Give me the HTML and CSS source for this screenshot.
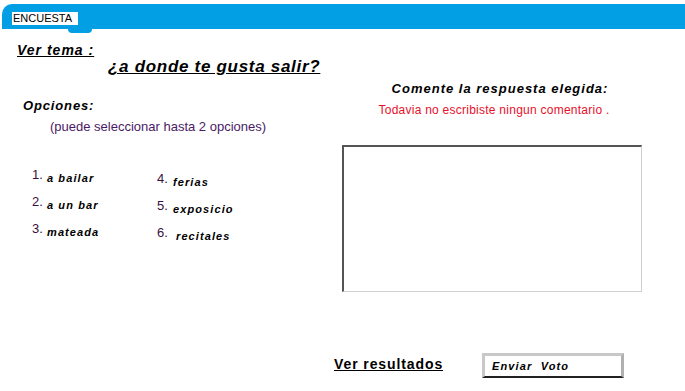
FILE: index.html
```html
<!DOCTYPE html>
<html lang="es">
<head>
  <meta charset="UTF-8" />
  <title>Encuesta</title>
  <link rel="stylesheet" href="styles.css">
</head>
<body>

  <header class="topbar">
    <span class="tab">ENCUESTA</span>
    <span class="tab-notch"></span>
  </header>

  <div class="survey">
    <section class="left">
      <div class="tema-label">Ver tema :</div>
      <h1 class="tema">¿a donde te gusta salir?</h1>
      <h2 class="opciones">Opciones:</h2>
      <p class="hint">(puede seleccionar hasta 2 opciones)</p>

      <div class="options">
        <ul class="col">
          <li><span class="num">1.</span><span class="opt">a bailar</span></li>
          <li><span class="num">2.</span><span class="opt">a un bar</span></li>
          <li><span class="num">3.</span><span class="opt">mateada</span></li>
        </ul>
        <ul class="col col-2">
          <li><span class="num">4.</span><span class="opt">ferias</span></li>
          <li><span class="num">5.</span><span class="opt">exposicio</span></li>
          <li><span class="num">6.</span><span class="opt opt-wide">recitales</span></li>
        </ul>
      </div>
    </section>

    <section class="right">
      <h2 class="comment-title">Comente la respuesta elegida:</h2>
      <p class="warn">Todavia no escribiste ningun comentario .</p>
      <textarea class="comment"></textarea>
    </section>
  </div>

  <footer class="actions">
    <a href="#" class="results">Ver resultados</a>
    <button class="vote">Enviar&nbsp; Voto</button>
  </footer>

</body>
</html>
```

FILE: styles.css
```css
* {
  margin: 0;
  padding: 0;
  box-sizing: border-box;
}

html, body {
  width: 100%;
  min-height: 100vh;
  background: #fff;
  color: #000;
  font-family: 'Liberation Sans', Arial, sans-serif;
}

/* top bar */
.topbar {
  position: relative;
  height: 25px;
  margin: 4px 0 0 2px;
  background: #039fe5;
  border-top-left-radius: 10px;
  padding: 4px 0 0 10px;
}

.tab {
  display: inline-block;
  background: #fff;
  font-size: 11px;
  line-height: 13px;
  height: 13px;
  width: 66px;
  padding-left: 1px;
}

.tab-notch {
  position: absolute;
  left: 66px;
  top: 25px;
  width: 24px;
  height: 4px;
  background: #039fe5;
  border-radius: 0 0 12px 12px;
}

/* main area */
.survey {
  display: flex;
}

.left {
  width: 334px;
  flex-shrink: 0;
}

.tema-label {
  margin: 14px 0 0 17px;
  font-size: 14px;
  font-weight: bold;
  font-style: italic;
  text-decoration: underline;
  letter-spacing: 1px;
  line-height: 15px;
}

.tema {
  margin: -1px 0 0 108px;
  font-size: 17px;
  font-weight: bold;
  font-style: italic;
  text-decoration: underline;
  letter-spacing: 0.7px;
  line-height: 20px;
}

.opciones {
  margin: 21px 0 0 23px;
  font-size: 13px;
  font-weight: bold;
  font-style: italic;
  letter-spacing: 0.85px;
  line-height: 15px;
}

.hint {
  margin: 6px 0 0 50px;
  font-size: 13px;
  color: #4a1a66;
  line-height: 15px;
}

.options {
  display: flex;
  gap: 40px;
  margin: 34px 0 0 32px;
}

.col {
  list-style: none;
  width: 85px;
  display: flex;
  flex-direction: column;
  gap: 11px;
}

.col-2 {
  margin-top: 4px;
}

.col li {
  display: flex;
  align-items: flex-start;
  height: 16px;
}

.num {
  font-size: 13px;
  color: #3a1040;
  line-height: 14px;
  width: 15px;
}

.col-2 .num {
  width: 16px;
}

.opt {
  margin-top: 4px;
  font-size: 11px;
  font-weight: bold;
  font-style: italic;
  letter-spacing: 1.1px;
  line-height: 13px;
}

.opt-wide {
  margin-left: 3px;
}

.right {
  width: 316px;
  display: flex;
  flex-direction: column;
  align-items: center;
}

.comment-title {
  margin: 52px 0 0 16px;
  font-size: 13px;
  font-weight: bold;
  font-style: italic;
  letter-spacing: 1px;
  line-height: 15px;
}

.warn {
  margin: 7px 0 0 4px;
  font-size: 12px;
  color: #e8102a;
  letter-spacing: 0.25px;
  line-height: 14px;
}

.comment {
  align-self: flex-start;
  margin: 28px 0 0 8px;
  width: 300px;
  height: 147px;
  border: 2px solid;
  border-color: #555 #d0d0d0 #d0d0d0 #555;
  border-right-width: 1px;
  border-bottom-width: 1px;
  resize: none;
}

/* bottom */
.actions {
  display: flex;
  align-items: flex-start;
  margin: 61px 0 0 334px;
}

.results {
  margin-top: 4px;
  font-size: 14px;
  font-weight: bold;
  color: #000;
  text-decoration: underline;
  letter-spacing: 0.9px;
  line-height: 15px;
}

.vote {
  margin-left: 39px;
  width: 142px;
  height: 25px;
  background: #fff;
  border: 3px solid #c8c8c8;
  border-right-color: #b0b0b0;
  border-bottom: 2px solid #222;
  text-align: left;
  padding-left: 7px;
  font-family: 'Liberation Sans', Arial, sans-serif;
  font-size: 11px;
  font-weight: bold;
  font-style: italic;
  letter-spacing: 1.1px;
}
```
